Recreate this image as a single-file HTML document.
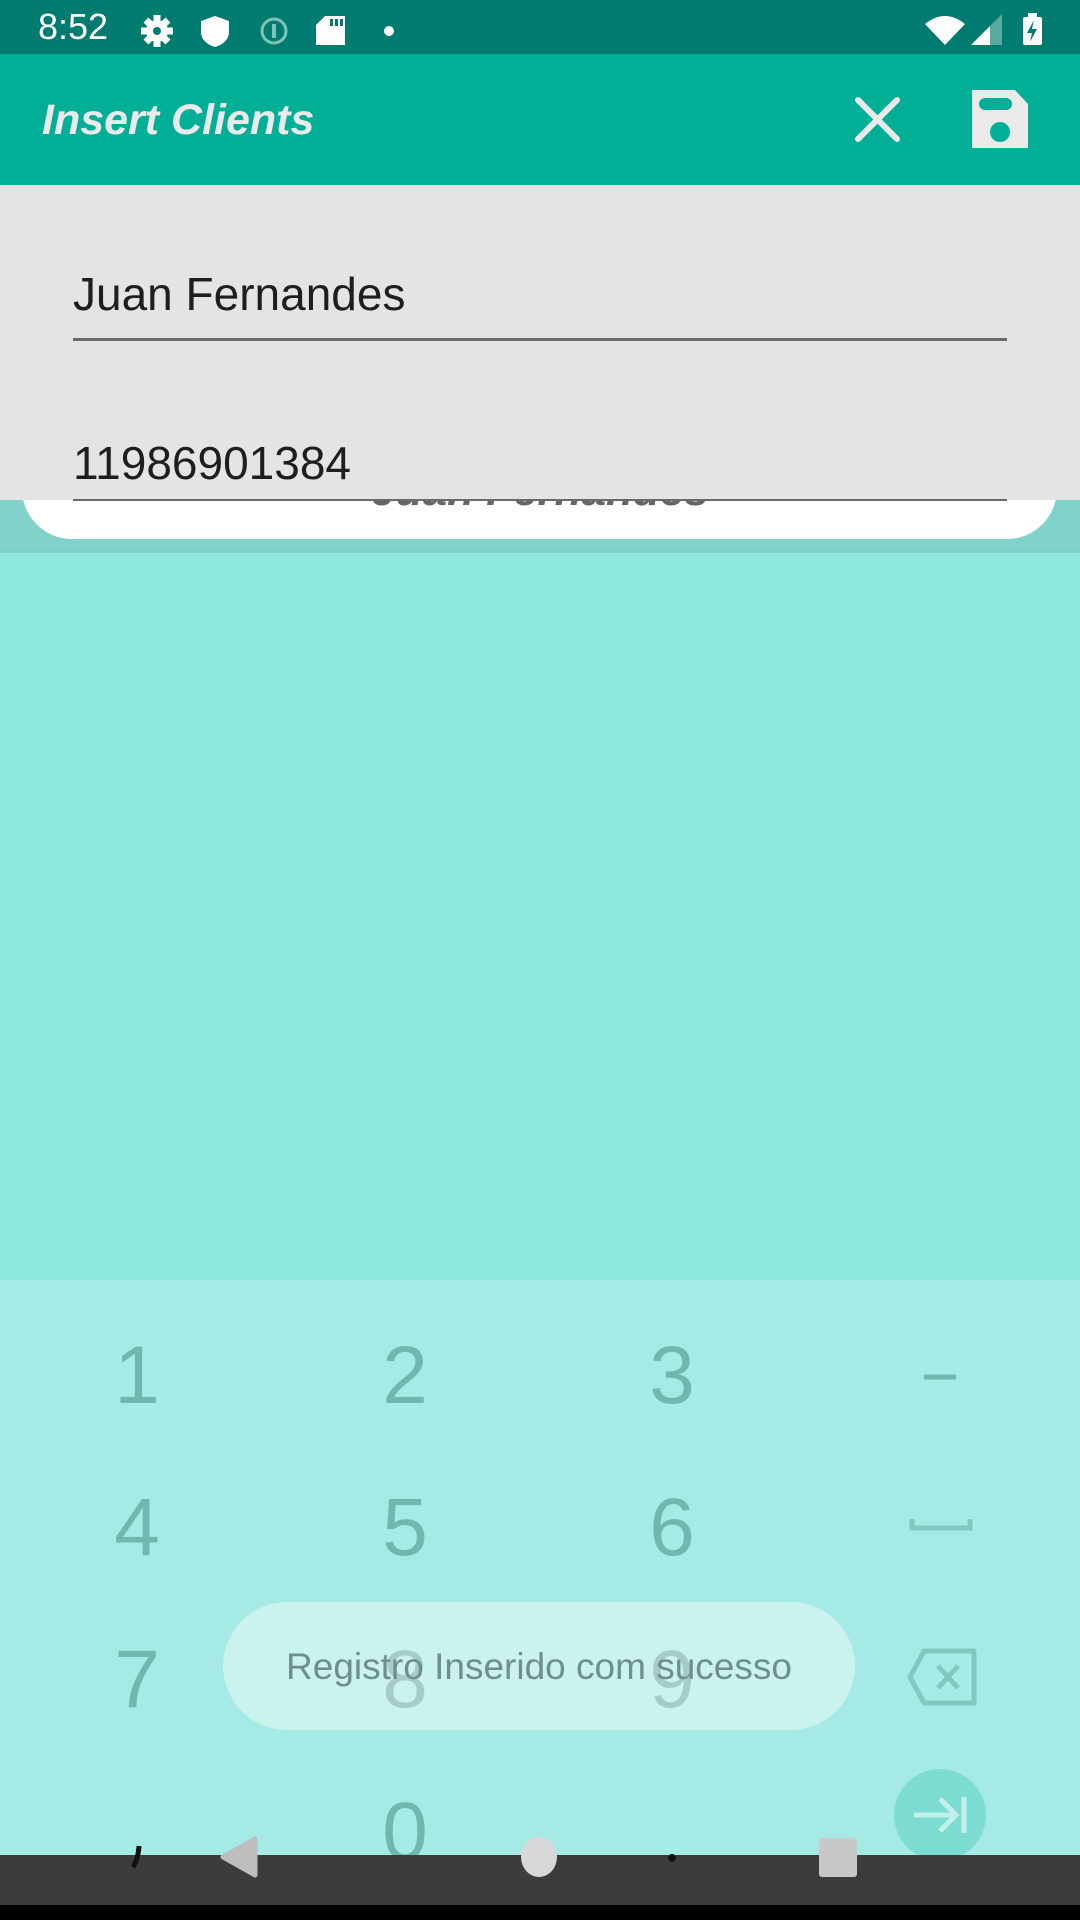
<!DOCTYPE html>
<html><head><meta charset="utf-8"><style>
*{margin:0;padding:0;box-sizing:border-box}
body{width:1080px;height:1920px;position:relative;overflow:hidden;font-family:"Liberation Sans",sans-serif;background:#8ee7de}
.abs{position:absolute}
.key{position:absolute;width:200px;text-align:center;color:#6fb8b0;font-size:82px;line-height:100px}
</style></head><body>
<div class="abs" style="left:0;top:0;width:1080px;height:54px;background:#007b6f"></div>
<div class="abs" style="left:38px;top:7px;color:#fff;font-size:36px;line-height:40px">8:52</div>
<svg class="abs" style="left:0;top:0" width="1080" height="54">
<g fill="#fff">
<circle cx="157" cy="31" r="11"/>
<g stroke="#fff" stroke-width="7"><line x1="157" y1="15" x2="157" y2="47"/><line x1="141" y1="31" x2="173" y2="31"/><line x1="146" y1="20" x2="168" y2="42"/><line x1="146" y1="42" x2="168" y2="20"/></g>
<circle cx="157" cy="31" r="4" fill="#007b6f"/>
<path d="M215 16 L229 21 V32 C229 40 222 45 215 47 C208 45 201 40 201 32 V21 Z"/>
<path d="M325 16 H345 V45 H316 V25 Z"/>
<circle cx="389" cy="31" r="5"/>
<path d="M925 24 Q945 8 965 24 L945 45 Z"/>
<path d="M971 45 L990 26 V45 Z"/><path d="M990 26 L1002 14 V45 H990 Z" opacity=".35"/>
<rect x="1023" y="17" width="19" height="28" rx="2"/><rect x="1028" y="13" width="9" height="5"/>
</g>
<circle cx="274" cy="31" r="12" fill="none" stroke="#7fc2ba" stroke-width="3"/><rect x="272" y="24" width="4" height="14" fill="#7fc2ba"/>
<path d="M1034 20 L1027 33 H1032 L1030 42 L1037 29 H1032 Z" fill="#007b6f"/>
<g fill="#007b6f"><rect x="330" y="19" width="3" height="7"/><rect x="335" y="19" width="3" height="7"/><rect x="340" y="19" width="3" height="7"/></g>
</svg>
<div class="abs" style="left:0;top:54px;width:1080px;height:131px;background:#00af96"></div>
<div class="abs" style="left:42px;top:95px;color:#eaeaea;font-size:43px;font-weight:bold;font-style:italic;line-height:50px">Insert Clients</div>
<svg class="abs" style="left:820px;top:60px" width="240" height="120">
<g stroke="#eaeaea" stroke-width="6" stroke-linecap="round"><line x1="38" y1="40" x2="77" y2="79"/><line x1="77" y1="40" x2="38" y2="79"/></g>
<path d="M152 30 H195 L208 44 V88 H152 Z" fill="#eaeaea"/>
<rect x="159" y="38" width="33" height="12" rx="6" fill="#00af96"/>
<circle cx="180" cy="72" r="10" fill="#00af96"/>
</svg>
<div class="abs" style="left:0;top:553px;width:1080px;height:727px;background:#8ee7de"></div>
<div class="abs" style="left:0;top:500px;width:1080px;height:53px;background:#80d2ca"></div>
<div class="abs" style="left:0;top:549px;width:1080px;height:4px;background:#7fcfc6"></div>
<div class="abs" style="left:22px;top:440px;width:1035px;height:99px;background:#fff;border-radius:0 0 50px 50px"></div>
<div class="abs" style="left:0;top:466px;width:1080px;text-align:center;color:#666;font-size:44px;font-weight:bold;font-style:italic;line-height:50px">Juan Fernandes</div>
<div class="abs" style="left:0;top:185px;width:1080px;height:315px;background:#e4e4e4"></div>
<div class="abs" style="left:73px;top:268px;color:#1e1e1e;font-size:46px;line-height:52px">Juan Fernandes</div>
<div class="abs" style="left:73px;top:338px;width:934px;height:3px;background:#6b6b6b"></div>
<div class="abs" style="left:73px;top:437px;color:#1e1e1e;font-size:46px;line-height:52px">11986901384</div>
<div class="abs" style="left:73px;top:499px;width:934px;height:2px;background:#6b6b6b"></div>
<div class="abs" style="left:0;top:1280px;width:1080px;height:575px;background:#a5eae4"></div>
<div class="key" style="left:37px;top:1326px">1</div>
<div class="key" style="left:305px;top:1326px">2</div>
<div class="key" style="left:572px;top:1326px">3</div>
<div class="key" style="left:37px;top:1478px">4</div>
<div class="key" style="left:305px;top:1478px">5</div>
<div class="key" style="left:572px;top:1478px">6</div>
<div class="key" style="left:37px;top:1630px">7</div>
<div class="key" style="left:305px;top:1630px;color:#5e9d96">8</div>
<div class="key" style="left:572px;top:1630px;color:#5e9d96">9</div>
<div class="key" style="left:305px;top:1782px">0</div>
<svg class="abs" style="left:880px;top:1300px" width="120" height="470">
<line x1="44" y1="77" x2="76" y2="77" stroke="#6fb8b0" stroke-width="5"/>
<path d="M32 219 V228 H90 V219" fill="none" stroke="#7fc9c1" stroke-width="5"/>
<path d="M30 377 L44 351 H94 V403 H44 Z" fill="none" stroke="#7fc9c1" stroke-width="5" stroke-linejoin="round"/>
<g stroke="#7fc9c1" stroke-width="5"><line x1="58" y1="366" x2="78" y2="388"/><line x1="78" y1="366" x2="58" y2="388"/></g>
</svg>
<div class="abs" style="left:223px;top:1602px;width:632px;height:128px;background:rgba(240,250,249,0.5);border-radius:64px"></div>
<div class="abs" style="left:223px;top:1644px;width:632px;text-align:center;color:#6f8f8c;font-size:37px;line-height:46px">Registro Inserido com sucesso</div>
<div class="abs" style="left:894px;top:1769px;width:92px;height:92px;border-radius:50%;background:#7ddcd2"></div>
<svg class="abs" style="left:894px;top:1769px" width="92" height="92"><g stroke="#c2f0ea" stroke-width="5" fill="none"><line x1="20" y1="46" x2="62" y2="46"/><path d="M46 30 L62 46 L46 62"/><line x1="70" y1="28" x2="70" y2="64"/></g></svg>
<div class="abs" style="left:0;top:1855px;width:1080px;height:50px;background:#3c3c3c"></div>
<div class="abs" style="left:0;top:1905px;width:1080px;height:15px;background:#000"></div>
<svg class="abs" style="left:0;top:1820px" width="1080" height="90">
<path d="M255 19 V55 L223 37 Z" fill="#bdbdbd" stroke="#bdbdbd" stroke-width="5" stroke-linejoin="round"/>
<ellipse cx="539" cy="37" rx="18" ry="20" fill="#d8d8d8"/>
<rect x="819" y="18" width="38" height="39" rx="3" fill="#c8c8c8"/>
<circle cx="672" cy="38" r="4" fill="#111"/>
<path d="M139 26 Q138 40 133 47" stroke="#111" stroke-width="5" fill="none"/>
</svg>
</body></html>
